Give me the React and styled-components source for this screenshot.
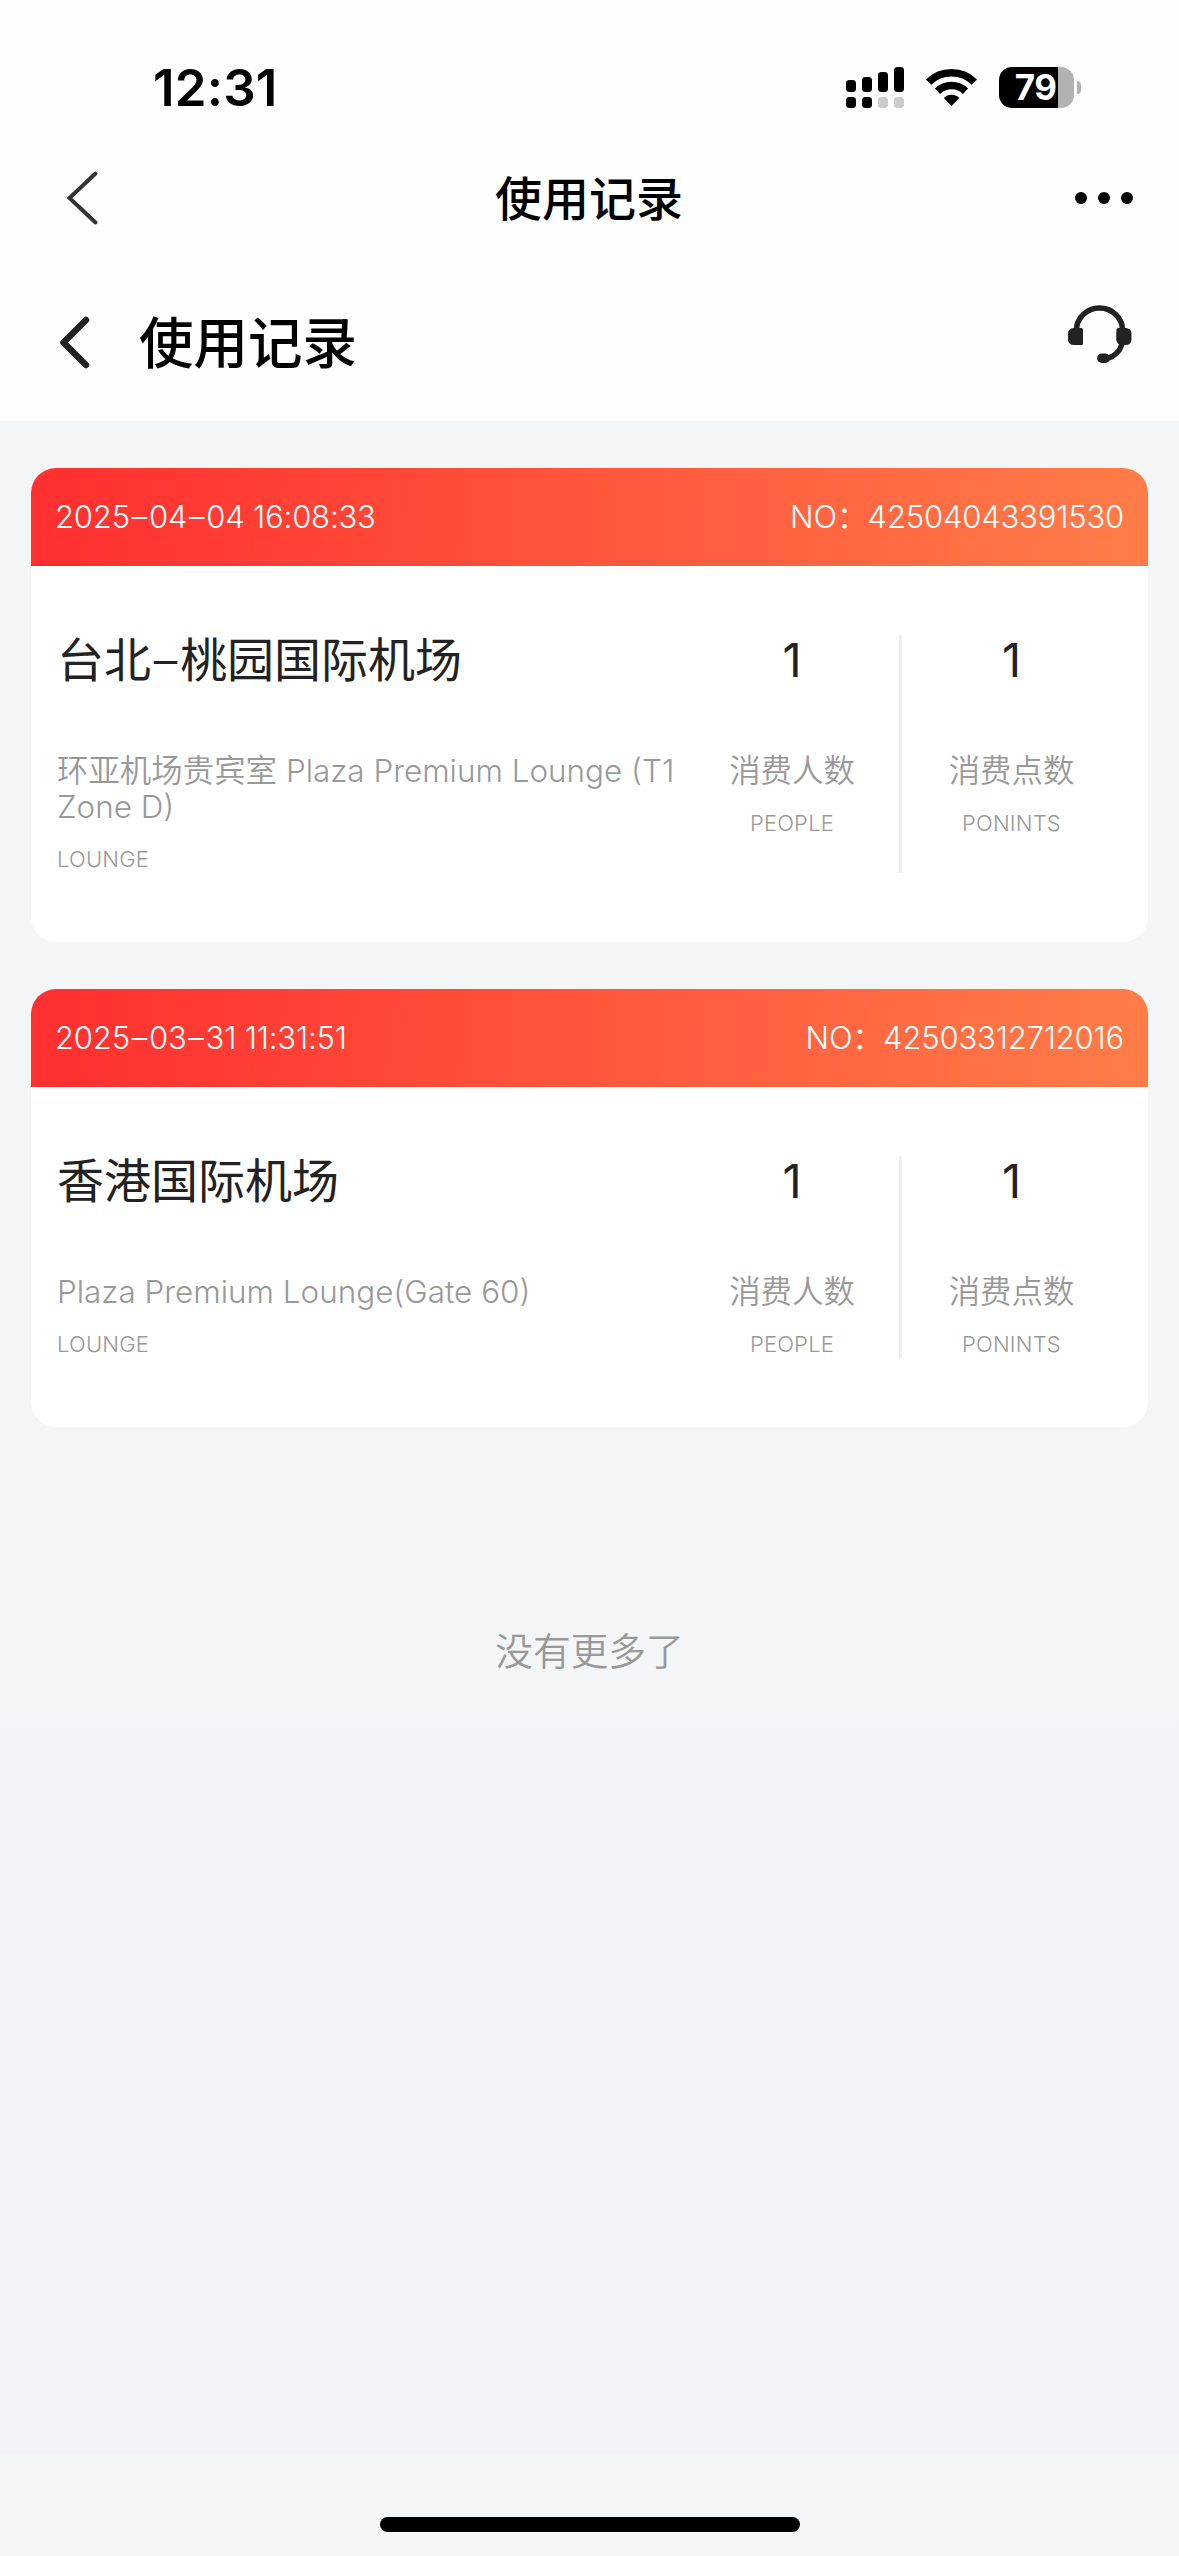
import React from "react";
import styled, { createGlobalStyle } from "styled-components";

const GlobalStyle = createGlobalStyle`
* {
  box-sizing: border-box;
}

body {
  margin: 0;
  background: #f3f5f7;
  font-family: Inter, "Noto Sans CJK SC", sans-serif;
  -webkit-font-smoothing: antialiased;
}
`;

const Page = styled.div`
display: flex;
flex-direction: column;
width: 1179px;
height: 2556px;
overflow: hidden;
background: linear-gradient(#f3f5f7 0 1710px, #f4f3f8 1790px 2455px, #f4f6f8 2455px);
`;

const TopArea = styled.header`
display: flex;
flex-direction: column;
height: 421px;
background: #fefefe;
`;

const StatusBar = styled.div`
display: flex;
align-items: center;
justify-content: space-between;
height: 141px;
padding: 34px 98px 0 153px;
`;

const Clock = styled.div`
font-size: 51px;
font-weight: 600;
line-height: 60px;
letter-spacing: 0.2px;
color: #000;
`;

const StatusIcons = styled.div`
display: flex;
align-items: center;
gap: 22px;
`;

const Battery = styled.div`
display: flex;
align-items: center;
gap: 3px;
`;

const BatteryBody = styled.div`
display: flex;
align-items: center;
justify-content: center;
width: 75px;
height: 41px;
padding-right: 2px;
border-radius: 13px;
background: linear-gradient(90deg, #000 0 59px, #b2b2b2 59px);
color: #fff;
font-size: 35px;
font-weight: 650;
letter-spacing: -0.5px;
line-height: 41px;
`;

const BatteryTip = styled.div`
width: 4px;
height: 13px;
border-radius: 0 4px 4px 0;
background: #b2b2b2;
`;

const NavBar = styled.div`
display: grid;
grid-template-columns: 1fr auto 1fr;
align-items: center;
height: 114px;
padding: 0 46px;
`;

const BackIcon = styled.svg`
margin-left: 19px;
`;

const NavTitle = styled.h1`
margin: 2px 1px 0 0;
font-size: 47px;
font-weight: 500;
line-height: 60px;
color: #000;
`;

const More = styled.div`
display: flex;
justify-content: flex-end;
gap: 11px;
`;

const Dot = styled.span`
width: 12px;
height: 12px;
border-radius: 50%;
background: #000;
`;

const SubBar = styled.div`
display: flex;
align-items: center;
flex: 1;
padding: 9px 47px 0 58px;
`;

const SubTitle = styled.h2`
flex: 1;
margin: 0 0 0 49px;
font-size: 54.5px;
font-weight: 500;
line-height: 70px;
color: #000;
`;

const ServiceIcon = styled.svg`
margin-bottom: 17px;
`;

const List = styled.main`
display: flex;
flex-direction: column;
flex: 1;
gap: 47px;
padding: 47px 31px 0;
`;

const Card = styled.section`
overflow: hidden;
border-radius: 25px;
background: #fff;
`;

const CardHead = styled.div`
display: flex;
align-items: center;
justify-content: space-between;
height: 98px;
padding: 0 24px;
background: linear-gradient(94deg, #ff3030 2%, #ff7b48 98%);
color: #fff;
font-size: 31px;
font-weight: 350;
line-height: 36px;
letter-spacing: -0.18px;
`;

const CardBody = styled.div`
display: flex;
padding: 69px 27px 69px 26px;
`;

const Place = styled.div`
width: 628px;
`;

const PlaceName = styled.div`
font-size: 47px;
line-height: 50px;
color: #222;
`;

const Dash = styled.span`
padding: 0 0.06em;
font-weight: 300;
`;

const Desc = styled.div`
margin-top: 68px;
font-size: 31.44px;
font-weight: 350;
line-height: 36px;
color: #999;
white-space: nowrap;
`;

const Small = styled.div`
margin-top: 20px;
font-size: 22px;
font-weight: 350;
line-height: 28px;
letter-spacing: 0.2px;
color: #999;
`;

const Stat = styled.div`
display: flex;
flex-direction: column;
align-items: center;
width: ${(p) => (p.$divider ? "217px" : "219px")};
border-right: ${(p) => (p.$divider ? "3px solid #eee" : "none")};
`;

const NoMore = styled.div`
margin-top: 151px;
font-size: 37.7px;
font-weight: 350;
line-height: 52px;
text-align: center;
color: #999;
`;

const HomeBar = styled.div`
align-self: center;
width: 420px;
height: 15px;
margin-bottom: 24px;
border-radius: 8px;
background: #000;
`;

const records = [
  {
    time: "2025–04–04 16:08:33",
    no: "42504043391530",
    place: "台北–桃园国际机场",
    lounge: ["环亚机场贵宾室 Plaza Premium Lounge (T1", "Zone D)"],
    people: 1,
    points: 1,
  },
  {
    time: "2025–03–31 11:31:51",
    no: "42503312712016",
    place: "香港国际机场",
    lounge: ["Plaza Premium Lounge(Gate 60)"],
    people: 1,
    points: 1,
  },
];

// gives every dash a little air on both sides
function withDashes(text) {
  return text.split("–").map((part, i) => (
    <React.Fragment key={i}>
      {i > 0 && <Dash>–</Dash>}
      {part}
    </React.Fragment>
  ));
}

function SignalIcon() {
  return (
    <svg width="58" height="41" viewBox="0 0 58 41">
      <rect x="0" y="13" width="10" height="12" rx="3.5" />
      <rect x="16" y="10" width="10" height="15" rx="3.5" />
      <rect x="32" y="5" width="10" height="20" rx="3.5" />
      <rect x="48" y="0" width="10" height="25" rx="3.5" />
      <rect x="0" y="30" width="10" height="11" rx="3.5" />
      <rect x="16" y="30" width="10" height="11" rx="3.5" />
      <rect x="32" y="30" width="10" height="11" rx="3.5" fill="#ccc" />
      <rect x="48" y="30" width="10" height="11" rx="3.5" fill="#ccc" />
    </svg>
  );
}

function WifiIcon() {
  return (
    <svg width="51" height="37" viewBox="0 0 51 37" fill="none" stroke="#000" strokeWidth="7.5">
      <path d="M2.6 13.2a32.5 32.5 0 0 1 45.8 0" />
      <path d="M11.5 22.2a20 20 0 0 1 28 0" />
      <path d="M25.5 37l-7.7-8a11 11 0 0 1 15.4 0z" fill="#000" stroke="none" />
    </svg>
  );
}

function HeadsetIcon() {
  return (
    <ServiceIcon width="64" height="58" viewBox="0 0 64 58" fill="none" stroke="#222" strokeWidth="5.5">
      <path d="M8.5 25a23 22 0 0 1 46 0" />
      <path d="M54 39c-2 7-7 12.5-16 15" />
      <rect x="0" y="23" width="15" height="17" rx="5.5" fill="#222" stroke="none" />
      <path d="M8 23h5.5a1.5 1.5 0 0 1 1.5 1.5v14a1.5 1.5 0 0 1-1.5 1.5H8z" fill="#222" stroke="none" />
      <rect x="48.5" y="23" width="15" height="17" rx="5.5" fill="#222" stroke="none" />
      <path d="M55 23h-5a1.5 1.5 0 0 0-1.5 1.5v11L52 40h3z" fill="#222" stroke="none" />
      <rect x="29" y="48.5" width="13" height="9.5" rx="4.75" fill="#222" stroke="none" />
    </ServiceIcon>
  );
}

function Record({ record }) {
  return (
    <Card>
      <CardHead>
        <span>{withDashes(record.time)}</span>
        <span>NO：{record.no}</span>
      </CardHead>
      <CardBody>
        <Place>
          <PlaceName>{withDashes(record.place)}</PlaceName>
          <Desc>
            {record.lounge.map((line) => (
              <div key={line}>{line}</div>
            ))}
          </Desc>
          <Small>LOUNGE</Small>
        </Place>
        <Stat $divider>
          <PlaceName>{record.people}</PlaceName>
          <Desc>消费人数</Desc>
          <Small>PEOPLE</Small>
        </Stat>
        <Stat>
          <PlaceName>{record.points}</PlaceName>
          <Desc>消费点数</Desc>
          <Small>PONINTS</Small>
        </Stat>
      </CardBody>
    </Card>
  );
}

export default function App() {
  return (
    <Page>
      <GlobalStyle />
      <TopArea>
        <StatusBar>
          <Clock>12:31</Clock>
          <StatusIcons>
            <SignalIcon />
            <WifiIcon />
            <Battery>
              <BatteryBody>79</BatteryBody>
              <BatteryTip />
            </Battery>
          </StatusIcons>
        </StatusBar>
        <NavBar>
          <BackIcon width="34" height="56" viewBox="0 0 34 56" fill="none" stroke="#333" strokeWidth="4" strokeLinecap="round">
            <path d="M30.5 3.5L4.5 28l26 24.5" />
          </BackIcon>
          <NavTitle>使用记录</NavTitle>
          <More>
            <Dot />
            <Dot />
            <Dot />
          </More>
        </NavBar>
        <SubBar>
          <svg width="32" height="54" viewBox="0 0 32 54" fill="none" stroke="#222" strokeWidth="6.5" strokeLinecap="round" strokeLinejoin="round">
            <path d="M28 4L5.5 26.5l22.5 22.5" />
          </svg>
          <SubTitle>使用记录</SubTitle>
          <HeadsetIcon />
        </SubBar>
      </TopArea>
      <List>
        {records.map((r) => (
          <Record key={r.no} record={r} />
        ))}
        <NoMore>没有更多了</NoMore>
      </List>
      <HomeBar />
    </Page>
  );
}
